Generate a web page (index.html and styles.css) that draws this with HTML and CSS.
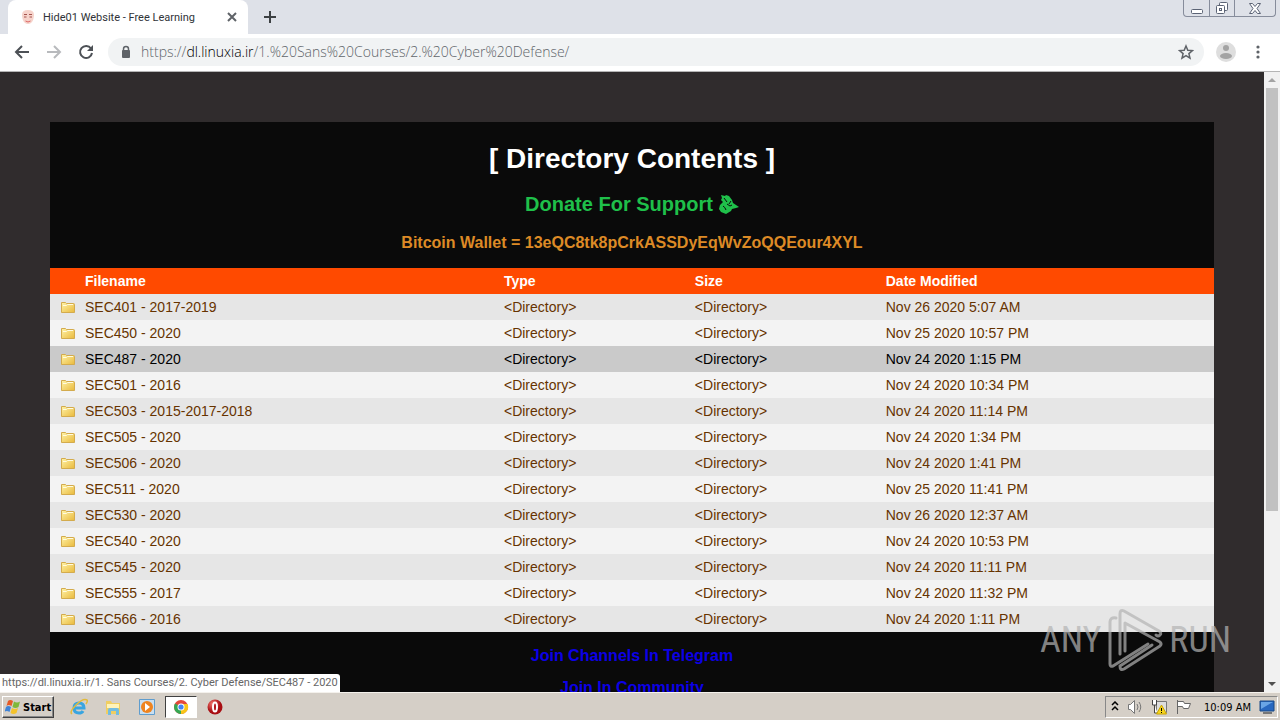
FILE: index.html
```html
<!DOCTYPE html>
<html lang="en">
<head>
    <meta charset="UTF-8">
    <meta name="viewport" content="width=device-width, initial-scale=1.0">
    <title>Hide01 Website - Free Learning</title>
    <link rel="stylesheet" href="styles.css">
</head>
<body>
    <svg class="defs" aria-hidden="true">
        <defs>
            <linearGradient id="gold" x1="0" y1="0" x2="1" y2="1">
                <stop offset="0" stop-color="#fff3a8"/>
                <stop offset="1" stop-color="#e9b93c"/>
            </linearGradient>
            <radialGradient id="red" cx="35%" cy="30%">
                <stop offset="0" stop-color="#f47b72"/>
                <stop offset="1" stop-color="#a80d12"/>
            </radialGradient>
            <symbol id="folder" viewBox="0 0 16 16">
                <path d="M1.500 3.500h4l1 1h7a1 1 0 0 1 1 1v8h-13z" fill="url(#gold)" stroke="#d3ab4d"/>
                <path d="M3 6.500h3.500l1-1H13" fill="none" stroke="#fffbe0"/>
            </symbol>
        </defs>
    </svg>

    <header class="tabs">
        <div class="tab">
            <svg class="favicon" viewBox="0 0 16 16">
                <path d="M2 6Q2 1 8 1t6 5q0 5-3 8-3 2-6 0Q2 11 2 6z" fill="#f6d3cb"/>
                <path d="M4 5.500h3M9 5.500h3M4 8h2.500M9.500 8H12" stroke="#a5544e"/>
                <path d="M5.500 12q2.500 2 5 0" fill="none" stroke="#d66"/>
            </svg>
            <span class="tab-title">Hide01 Website - Free Learning</span>
            <button class="icon-btn" aria-label="Close tab">
                <svg width="10" height="10" viewBox="0 0 10 10"><path d="M1 1l8 8M9 1L1 9" stroke="#5f6368" stroke-width="2"/></svg>
            </button>
        </div>
        <button class="icon-btn new-tab" aria-label="New tab">
            <svg width="12" height="12" viewBox="0 0 12 12"><path d="M6 0v12M0 6h12" stroke="#3c4043" stroke-width="2"/></svg>
        </button>
        <div class="window-controls">
            <button aria-label="Minimize">
                <svg width="14" height="14" viewBox="0 0 14 14"><rect x="1.500" y="8.500" width="11" height="4" rx="1" fill="#fff" stroke="#5b6375"/></svg>
            </button>
            <button aria-label="Restore">
                <svg width="14" height="14" viewBox="0 0 14 14" fill="#fff" stroke="#5b6375"><rect x="4.500" y="1.500" width="8" height="8" rx="1"/><rect x="1.500" y="4.500" width="8" height="8" rx="1"/><rect x="4.500" y="7.500" width="2" height="2"/></svg>
            </button>
            <button class="wide" aria-label="Close">
                <svg width="14" height="14" viewBox="0 0 14 14"><path d="M1.500 2.500h3L7 5.500l2.500-3h3L9 7.500l3.500 5h-3L7 9.500l-2.500 3h-3L5 7.500z" fill="#fff" stroke="#5b6375"/></svg>
            </button>
        </div>
    </header>

    <nav class="toolbar">
        <button class="icon-btn" aria-label="Back">
            <svg width="16" height="16" viewBox="0 0 16 16" fill="none" stroke="#4d5156" stroke-width="2"><path d="M15 8H2M8 2L2 8l6 6"/></svg>
        </button>
        <button class="icon-btn" aria-label="Forward">
            <svg width="16" height="16" viewBox="0 0 16 16" fill="none" stroke="#b8babd" stroke-width="2"><path d="M1 8h13M8 2l6 6-6 6"/></svg>
        </button>
        <button class="icon-btn" aria-label="Reload">
            <svg width="16" height="16" viewBox="0 0 16 16"><path d="M13 4.500A6 6 0 1 0 14 9" fill="none" stroke="#4d5156" stroke-width="2"/><path d="M15 1v6H9z" fill="#4d5156"/></svg>
        </button>
        <div class="address">
            <svg width="10" height="14" viewBox="0 0 10 14"><rect x="1" y="5" width="8" height="8" rx="1" fill="#5f6368"/><path d="M2.500 6V4a2.500 2.500 0 0 1 5 0v2" fill="none" stroke="#5f6368" stroke-width="1.500"/></svg>
            <span class="url">https://<b>dl.linuxia.ir</b>/1.%20Sans%20Courses/2.%20Cyber%20Defense/</span>
            <button class="icon-btn" aria-label="Bookmark">
                <svg width="16" height="16" viewBox="0 0 16 16"><path d="M8 2l1.800 4.200 4.700.4-3.600 3 1.100 4.600L8 11.700l-4 2.500 1.100-4.600-3.600-3 4.700-.4z" fill="none" stroke="#5f6368" stroke-width="1.500"/></svg>
            </button>
        </div>
        <button class="icon-btn profile" aria-label="Profile">
            <svg width="20" height="20" viewBox="0 0 20 20"><circle cx="10" cy="10" r="10" fill="#dedede"/><circle cx="10" cy="6" r="3" fill="#a3a3a3"/><ellipse cx="10" cy="14" rx="6" ry="3" fill="#a3a3a3"/></svg>
        </button>
        <button class="icon-btn" aria-label="Menu">
            <svg width="4" height="14" viewBox="0 0 4 14" fill="#5f6368"><circle cx="2" cy="2" r="1.600"/><circle cx="2" cy="7" r="1.600"/><circle cx="2" cy="12" r="1.600"/></svg>
        </button>
    </nav>

    <div class="view">
        <main class="page">
            <div class="container">
                <h1>[ Directory Contents ]</h1>
                <h2>Donate For Support
                    <svg width="20" height="20" viewBox="0 0 20 20" fill="#1fc04a"><path d="M2 1l4 1 1-1 3 1 3 4 1 3 6 4-3 1-4 1-1 2-5 3-5-2-2-3 1-4 3-3-2-2 1-2z"/><path d="M5 4l3 4M4 12q2 1 3 4M8 10l3 2 2-1M12 7l-2 3" stroke="#0a0a0a" fill="none"/></svg>
                </h2>
                <h3>Bitcoin Wallet = 13eQC8tk8pCrkASSDyEqWvZoQQEour4XYL</h3>
                <table>
                    <thead>
                        <tr><th>Filename</th><th>Type</th><th>Size</th><th>Date Modified</th></tr>
                    </thead>
                    <tbody id="files"></tbody>
                </table>
                <p class="join"><a href="#telegram">Join Channels In Telegram</a></p>
                <p class="join"><a href="#community">Join In Community</a></p>
            </div>
        </main>
        <div class="scrollbar">
            <button aria-label="Scroll up"><svg width="8" height="4" viewBox="0 0 8 4"><path d="M0 4l4-4 4 4z" fill="#a3a3a3"/></svg></button>
            <div class="track"><div class="thumb"></div></div>
            <button aria-label="Scroll down"><svg width="8" height="4" viewBox="0 0 8 4"><path d="M0 0l4 4 4-4z" fill="#505050"/></svg></button>
        </div>
        <div class="status">https://dl.linuxia.ir/1. Sans Courses/2. Cyber Defense/SEC487 - 2020</div>
        <div class="watermark">
            <span>ANY</span>
            <svg width="56" height="64" viewBox="0 0 56 64" fill="none" stroke="#b4b4b4" stroke-width="3" stroke-linejoin="round" stroke-linecap="round">
                <path d="M9 10q-6-1-6 4v42q0 3 3 2l35-22"/>
                <path d="M13 46V6q0-5 4-3l35 20q3 2 1 4-2 2-4 0"/>
                <path d="M18 43V15l35 19q2 2 0 4L17 61q-4 2-4-3l32-21"/>
            </svg>
            <span>RUN</span>
        </div>
    </div>

    <footer class="taskbar">
        <button class="start">
            <svg width="16" height="16" viewBox="0 0 16 16"><path d="M3 2q2-2 5 0L6.500 7q-3-2-5 0z" fill="#e65a26"/><path d="M9 2.500q3 2 6 0L13.500 8q-3 2-6 0z" fill="#7fb83a"/><path d="M1 8q2-2 5 0l-1.500 5q-3-2-5 0z" fill="#3f83d6"/><path d="M7 9q3 2 6 0l-1.500 5q-3 2-6 0z" fill="#f5c32b"/></svg>
            Start
        </button>
        <div class="launch">
            <button aria-label="Internet Explorer">
                <svg width="18" height="18" viewBox="0 0 18 18" fill="none"><path d="M4 10h10q0-5-5-5t-5 5q0 5 5 5 3 0 4-2" stroke="#39a5e0" stroke-width="3"/><path d="M2 16Q-1 14 6 7t11-5q1 1-1 4" stroke="#e3bb3b" stroke-width="1.500"/></svg>
            </button>
            <button aria-label="Explorer">
                <svg width="18" height="18" viewBox="0 0 18 18"><path d="M2 3h5l1 2h8v11H2z" fill="#f0ce61"/><path d="M3 6h12v4H3z" fill="#fff3b8"/><path d="M4 17v-5q0-2 2-2h7q2 0 2 2v5h-3v-4H7v4z" fill="#72bce0"/></svg>
            </button>
            <button aria-label="Media Player">
                <svg width="18" height="18" viewBox="0 0 18 18"><path d="M1.500 1.500h15v15h-15z" fill="#c9dff1" stroke="#5f9dce"/><circle cx="9" cy="9" r="6" fill="#ef8420"/><path d="M7 5l5 4-5 4z" fill="#fff"/></svg>
            </button>
            <button class="active" aria-label="Chrome">
                <svg width="16" height="16" viewBox="0 0 16 16"><circle cx="8" cy="8" r="7" fill="#e4483a"/><path d="M8 8L2 4.500A7 7 0 0 0 8 15z" fill="#35a853"/><path d="M8 8V15A7 7 0 0 0 14.500 5H8z" fill="#f8c518"/><circle cx="8" cy="8" r="3.500" fill="#fff"/><circle cx="8" cy="8" r="2.600" fill="#4384f3"/></svg>
            </button>
            <button aria-label="Opera">
                <svg width="16" height="16" viewBox="0 0 16 16"><circle cx="8" cy="8" r="7.500" fill="url(#red)"/><ellipse cx="8" cy="8" rx="2" ry="4.500" fill="#b0151a" stroke="#fff" stroke-width="2"/></svg>
            </button>
        </div>
        <div class="tray">
            <svg width="8" height="12" viewBox="0 0 8 12" fill="none" stroke="#000" stroke-width="1.500"><path d="M1 4l3-3 3 3M1 9l3-3 3 3"/></svg>
            <svg width="16" height="16" viewBox="0 0 16 16" fill="none" stroke="#777"><path d="M1.500 5.500h2l4-4v13l-4-4h-2z" fill="#fff"/><path d="M10 5q2 3 0 6M12 3q3.500 5 0 10"/></svg>
            <svg width="16" height="16" viewBox="0 0 16 16"><path d="M5.500 2.500h10v11h-10z" fill="#ddd" stroke="#777"/><path d="M1.500 1v5h4V1M3.500 6v8h3" fill="#fff" stroke="#444"/><path d="M10.500 6l5 9h-10z" fill="#f7d51d" stroke="#c9a400"/><path d="M10.500 9v3M10.500 13v1" stroke="#000"/></svg>
            <svg width="16" height="16" viewBox="0 0 16 16"><path d="M2.500 1v14M2.500 2.500h6l1 2h6l-2 5h-5l-1-2h-5" fill="#fff" stroke="#666"/></svg>
            <time>10:09 AM</time>
            <svg width="16" height="16" viewBox="0 0 16 16"><path d="M1 2h14v10H1z" fill="#2868c0" stroke="#184884"/><path d="M2 3h12L2 10z" fill="#69a5e6"/><path d="M4 14h9" stroke="#777" stroke-width="2"/></svg>
        </div>
    </footer>

    <script>
        const files = [
            ['SEC401 - 2017-2019', 'Nov 26 2020 5:07 AM'],
            ['SEC450 - 2020', 'Nov 25 2020 10:57 PM'],
            ['SEC487 - 2020', 'Nov 24 2020 1:15 PM'],
            ['SEC501 - 2016', 'Nov 24 2020 10:34 PM'],
            ['SEC503 - 2015-2017-2018', 'Nov 24 2020 11:14 PM'],
            ['SEC505 - 2020', 'Nov 24 2020 1:34 PM'],
            ['SEC506 - 2020', 'Nov 24 2020 1:41 PM'],
            ['SEC511 - 2020', 'Nov 25 2020 11:41 PM'],
            ['SEC530 - 2020', 'Nov 26 2020 12:37 AM'],
            ['SEC540 - 2020', 'Nov 24 2020 10:53 PM'],
            ['SEC545 - 2020', 'Nov 24 2020 11:11 PM'],
            ['SEC555 - 2017', 'Nov 24 2020 11:32 PM'],
            ['SEC566 - 2016', 'Nov 24 2020 1:11 PM']
        ];
        const selected = 2;

        document.getElementById('files').innerHTML = files.map(function([name, date], i) {
            return `<tr class="${i === selected ? 'selected' : ''}">
                <td><a class="name" href="#"><svg width="16" height="16"><use href="#folder"/></svg>${name}</a></td>
                <td><a href="#">&lt;Directory&gt;</a></td>
                <td><a href="#">&lt;Directory&gt;</a></td>
                <td><a href="#">${date}</a></td>
            </tr>`;
        }).join('');
    </script>
</body>
</html>
```
FILE: styles.css
```css
* {
    box-sizing: border-box;
}
body {
    margin: 0;
    height: 100vh;
    display: flex;
    flex-direction: column;
    overflow: hidden;
    font-family: "DejaVu Sans Condensed", "DejaVu Sans", sans-serif;
    font-size: 11px;
}
svg {
    display: block;
    flex: none;
}
button {
    font: inherit;
    border: none;
    background: none;
    padding: 0;
}
.defs {
    position: absolute;
    width: 0;
    height: 0;
}
.icon-btn {
    display: flex;
    align-items: center;
    justify-content: center;
}

/* tab strip */
.tabs {
    display: flex;
    height: 34px;
    flex: none;
    padding-left: 8px;
    background: #dee1e8;
}
.tab {
    display: flex;
    align-items: center;
    width: 240px;
    padding: 0 11px 0 12px;
    gap: 7px;
    background: #fff;
    border-radius: 8px 8px 0 0;
}
.favicon {
    width: 16px;
    height: 16px;
}
.tab-title {
    flex: 1;
    white-space: nowrap;
    font-family: "Roboto", sans-serif;
    color: #303338;
}
.new-tab {
    width: 44px;
}
.window-controls {
    display: flex;
    height: 17px;
    margin-left: auto;
    margin-right: 4px;
    border: 1px solid #868c9b;
    border-top: none;
    border-radius: 0 0 4px 4px;
}
.window-controls button {
    display: flex;
    align-items: center;
    justify-content: center;
    width: 25px;
}
.window-controls button + button {
    border-left: 1px solid #868c9b;
}
.window-controls .wide {
    width: 41px;
}

/* toolbar */
.toolbar {
    display: flex;
    align-items: center;
    flex: none;
    height: 38px;
    padding: 0 20px 2px 14px;
    gap: 16px;
    background: #fff;
    border-bottom: 1px solid #b5b5b5;
}
.address {
    display: flex;
    align-items: center;
    flex: 1;
    height: 28px;
    padding: 0 10px 0 13px;
    margin-left: -2px;
    margin-right: -4px;
    gap: 10px;
    border-radius: 14px;
    background: #f1f3f4;
}
.profile {
    margin-right: 4px;
}
.url {
    flex: 1;
    font-family: "Open Sans", sans-serif;
    font-size: 14px;
    font-weight: 300;
    color: #60656a;
}
.url b {
    font-weight: 300;
    color: #000;
}

/* page */
.view {
    position: relative;
    display: flex;
    flex: 1;
    min-height: 0;
}
.page {
    flex: 1;
    overflow: hidden;
    padding: 50px;
    background: #302c2d;
    font-family: "Liberation Sans", Arial, sans-serif;
    font-size: 14px;
}
.container {
    padding-bottom: 20px;
    background: #0a0a0a;
    text-align: center;
}
h1, h2, h3 {
    margin: 0;
}
h1 {
    padding-top: 21px;
    font-size: 28px;
    line-height: 32px;
    color: #fff;
}
h2 {
    display: flex;
    justify-content: center;
    align-items: center;
    gap: 6px;
    padding-top: 17px;
    font-size: 20px;
    line-height: 24px;
    color: #1fc04a;
}
h3 {
    padding: 17px 0 15px;
    font-size: 16px;
    line-height: 20px;
    color: #dd8a26;
}
table {
    width: 100%;
    table-layout: fixed;
    border-collapse: collapse;
    text-align: left;
}
th, td {
    height: 26px;
    padding: 0;
    line-height: 16px;
}
th {
    width: 16.4%;
    background: #ff4a00;
    color: #fff;
}
th:first-child {
    width: 39%;
    padding-left: 35px;
}
th:last-child {
    width: auto;
}
td a {
    display: block;
    color: #663300;
    text-decoration: none;
}
.name {
    display: flex;
    gap: 9px;
    padding-left: 10px;
}
tbody tr {
    background: #f3f3f3;
}
tbody tr:nth-child(odd) {
    background: #e6e6e6;
}
tbody .selected:nth-child(odd) {
    background: #cacaca;
}
.selected a {
    color: #000;
}
.join {
    margin: 0;
    padding-top: 16px;
    font-size: 16px;
    font-weight: bold;
    line-height: 16px;
}
.join a {
    color: #0c00e6;
    text-decoration: none;
}

/* scrollbar */
.scrollbar {
    display: flex;
    flex-direction: column;
    width: 16px;
    background: #f1f1f1;
}
.scrollbar button {
    display: flex;
    align-items: center;
    justify-content: center;
    height: 16px;
}
.track {
    flex: 1;
    padding: 0 2px;
}
.thumb {
    height: 72%;
    background: #c1c1c1;
}

/* overlays */
.status {
    position: absolute;
    left: 0;
    bottom: 0;
    padding: 1px 2px;
    line-height: 16px;
    border-radius: 0 3px 0 0;
    background: #fff;
    color: #666;
    font-family: "Roboto", sans-serif;
}
.watermark {
    position: absolute;
    right: 49px;
    bottom: 20px;
    display: flex;
    align-items: center;
    gap: 6px;
    opacity: 0.7;
    color: #b4b4b4;
    font-family: "Roboto Condensed", "Roboto", sans-serif;
    font-size: 36px;
    font-weight: 400;
}

/* taskbar */
.taskbar {
    display: flex;
    align-items: center;
    flex: none;
    height: 28px;
    padding: 1px 2px 0;
    background: #d5cfc7;
    border-top: 1px solid #f4f1ec;
}
.start {
    display: flex;
    align-items: center;
    gap: 2px;
    height: 22px;
    padding: 0 2px;
    border: 1px solid;
    border-color: #fff #404040 #404040 #fff;
    box-shadow: inset -1px -1px #888;
    font-weight: bold;
}
.launch {
    display: flex;
    gap: 2px;
    padding-left: 9px;
}
.launch button {
    display: flex;
    align-items: center;
    justify-content: center;
    width: 32px;
    height: 22px;
}
.launch .active {
    background: #fff;
    border: 1px solid;
    border-color: #404040 #fff #fff #404040;
}
.tray {
    display: flex;
    align-items: center;
    gap: 8px;
    height: 22px;
    margin-left: auto;
    padding: 0 2px 0 5px;
    border: 1px solid;
    border-color: #888 #fff #fff #888;
}
.tray time {
    padding-left: 5px;
    white-space: nowrap;
}
```
